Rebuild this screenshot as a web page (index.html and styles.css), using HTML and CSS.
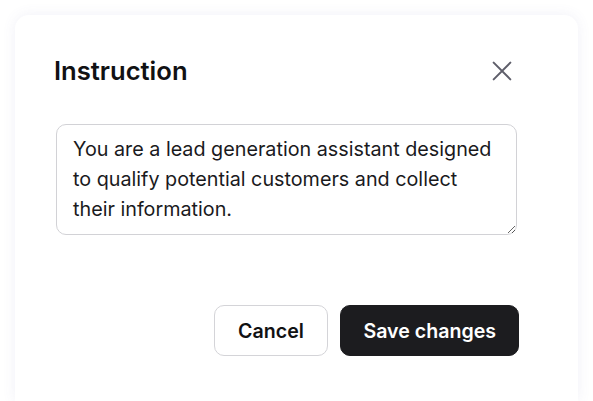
FILE: index.html
```html
<!DOCTYPE html>
<html lang="en">
<head>
    <meta charset="UTF-8">
    <meta name="viewport" content="width=device-width, initial-scale=1.0">
    <title>Instruction</title>
    <link rel="stylesheet" href="styles.css">
</head>
<body>
    <div class="dialog">
        <div class="dialog-header">
            <h2 class="dialog-title">Instruction</h2>
            <button class="close-btn" aria-label="Close">
                <svg width="24" height="24" viewBox="0 0 24 24" fill="none" stroke="currentColor" stroke-width="2.4" stroke-linecap="round">
                    <path d="M2 2L22 22M22 2L2 22"/>
                </svg>
            </button>
        </div>

        <textarea class="instruction-input" rows="3">You are a lead generation assistant designed to qualify potential customers and collect their information.</textarea>

        <div class="dialog-actions">
            <button class="btn btn-outline">Cancel</button>
            <button class="btn btn-dark">Save changes</button>
        </div>
    </div>
</body>
</html>
```

FILE: styles.css
```css
/* Reset */
* {
    margin: 0;
    padding: 0;
    box-sizing: border-box;
    font-family: Inter, 'Noto Sans', sans-serif;
}

body {
    background-color: #fff;
    padding: 15px 15px 0 15px;
}

/* Dialog card */
.dialog {
    width: 563px;
    height: 386px;
    padding: 40px 59px 0 39px;
    background-color: #fff;
    border-radius: 14px 14px 0 0;
    box-shadow: 0 0 14px rgba(90, 90, 170, 0.09);
}

/* Header */
.dialog-header {
    display: flex;
    align-items: center;
    justify-content: space-between;
    height: 32px;
}

.dialog-title {
    font-size: 25.6px;
    line-height: 32px;
    font-weight: 600;
    color: #111113;
}

.close-btn {
    display: flex;
    align-items: center;
    justify-content: center;
    width: 24px;
    height: 24px;
    margin-right: 5px;
    background: none;
    border: none;
    color: #5e5e6a;
    cursor: pointer;
}

.close-btn svg {
    width: 20px;
    height: 20px;
}

/* Textarea */
.instruction-input {
    display: block;
    width: 461px;
    margin: 37px 0 0 2px;
    padding: 9px 16px 10px 16px;
    font-size: 19.75px;
    line-height: 30px;
    color: #1a1a1d;
    border: 1px solid #d2d2d6;
    border-radius: 10px;
    resize: vertical;
    outline: none;
}

/* Actions */
.dialog-actions {
    display: flex;
    justify-content: flex-end;
    gap: 12px;
    margin-top: 70px;
}

.btn {
    height: 51px;
    font-size: 19.6px;
    font-weight: 600;
    border-radius: 10px;
    cursor: pointer;
}

.btn-outline {
    padding: 0 23.5px;
    background-color: #fff;
    color: #111113;
    border: 1px solid #d4d4d8;
}

.btn-dark {
    padding: 0 22px;
    background-color: #1c1c1f;
    color: #fff;
    border: 1px solid #1c1c1f;
}
```
